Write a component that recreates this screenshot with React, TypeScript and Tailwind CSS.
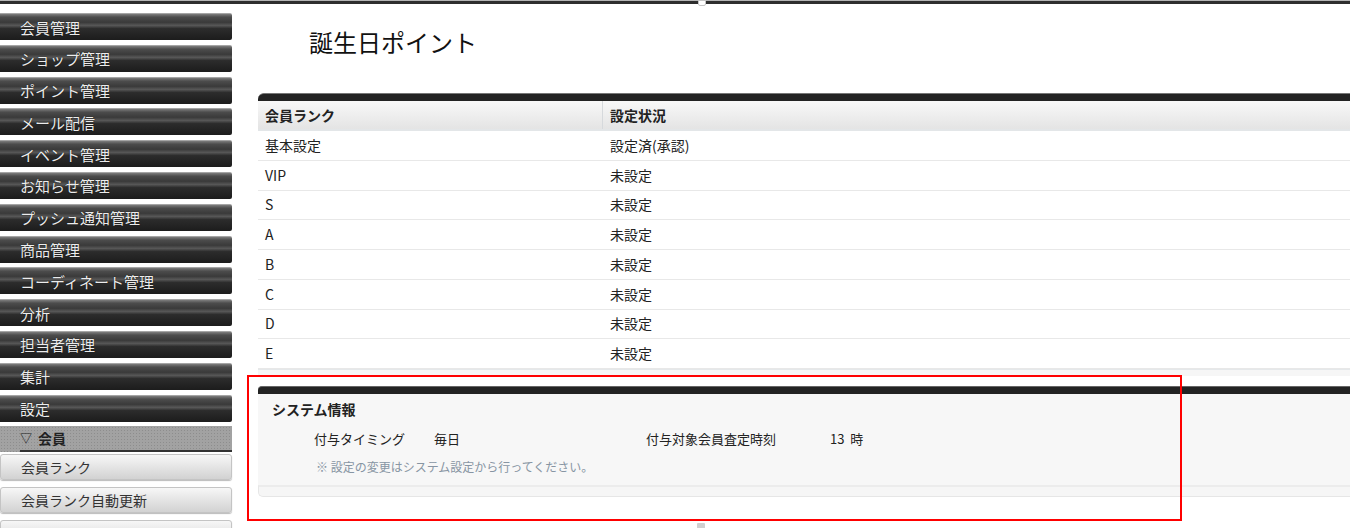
const font = { fontFamily: '"Noto Sans CJK JP", "Noto Sans", sans-serif' };

const mainMenu = [
  "会員管理",
  "ショップ管理",
  "ポイント管理",
  "メール配信",
  "イベント管理",
  "お知らせ管理",
  "プッシュ通知管理",
  "商品管理",
  "コーディネート管理",
  "分析",
  "担当者管理",
  "集計",
  "設定",
];

// the last one only peeks in at the bottom edge
const subMenu = ["会員ランク", "会員ランク自動更新", ""];

const ranks = [
  { name: "基本設定", status: "設定済(承認)" },
  { name: "VIP", status: "未設定" },
  { name: "S", status: "未設定" },
  { name: "A", status: "未設定" },
  { name: "B", status: "未設定" },
  { name: "C", status: "未設定" },
  { name: "D", status: "未設定" },
  { name: "E", status: "未設定" },
];

function Sidebar() {
  return (
    <nav className="w-[232px] shrink-0 pt-[9px] flex flex-col gap-[4.8px]">
      {mainMenu.map((label) => (
        <div
          key={label}
          className="h-[27px] flex items-center pl-[20px] rounded-r-[2px] border-t border-[#a5a5a5] bg-[linear-gradient(to_bottom,#7d7d7d_0%,#4c4c4c_12%,#3a3a3a_32%,#575757_44%,#2c2c2c_56%,#1c1c1c_100%)] text-[15px] leading-none text-[#ececec] [text-shadow:0_0_1px_#000]"
        >
          {label}
        </div>
      ))}
      <div className="h-[26px] flex items-end bg-[#a2a2a2] bg-[radial-gradient(#8d8d8d_1px,transparent_1px)] bg-[length:3px_3px] pl-[20px]">
        <div className="flex-1 h-full flex items-center border-b-2 border-[#333] text-[14px] font-bold leading-none text-[#222] gap-[6px]">
          <span className="text-[12px]">▽</span>
          <span>会員</span>
        </div>
      </div>
      <div className="flex flex-col gap-[7px] -mt-[3px]">
        {subMenu.map((label, i) => (
          <div
            key={i}
            className="h-[26px] flex items-center pl-[20px] rounded-[3px] border border-[#c4c4c4] bg-[linear-gradient(to_bottom,#f7f7f7_0%,#e8e8e8_40%,#d2d2d2_100%)] text-[14px] leading-none text-[#333] shadow-[0_1px_1px_#bbb]"
          >
            {label}
          </div>
        ))}
      </div>
    </nav>
  );
}

function RankTable() {
  return (
    <div className="mt-[38px]">
      <div className="h-[8px] bg-[#232323] rounded-tl-[6px] border-t border-[#777]" />
      <div className="flex h-[30px] bg-[linear-gradient(to_bottom,#f8f8f8,#e4e4e4)] border-b-2 border-[#e3e6e8] text-[14px] font-bold text-[#222]">
        <div className="w-[345px] flex items-center pl-[7px] border-r border-[#d6d9dc]">会員ランク</div>
        <div className="flex-1 flex items-center pl-[7px]">設定状況</div>
      </div>
      {ranks.map((r) => (
        <div
          key={r.name}
          className="flex h-[29.75px] border-b border-[#e8e8e8] bg-white text-[14px] text-[#222]"
        >
          <div className="w-[345px] flex items-center pl-[7px]">{r.name}</div>
          <div className="flex-1 flex items-center pl-[7px]">{r.status}</div>
        </div>
      ))}
      <div className="h-[7px] bg-[#f6f6f6] border-t border-[#e5e8ea]" />
    </div>
  );
}

function SystemInfo() {
  return (
    <div className="mt-[10px]">
      <div className="h-[8px] bg-[#232323] rounded-tl-[4px] border-t border-[#666]" />
      <div className="bg-[#f7f7f7] h-[91px] pt-[5px] pl-[14px] text-[#222]">
        <div className="h-[21px] flex items-center text-[14px] font-bold">システム情報</div>
        <div className="mt-[4px] h-[29px] flex items-center text-[13px] pl-[42px]">
          <span className="w-[120px]">付与タイミング</span>
          <span className="w-[212px]">毎日</span>
          <span className="w-[184px]">付与対象会員査定時刻</span>
          <span>13&nbsp;&nbsp;時</span>
        </div>
        <div className="h-[28px] flex items-center text-[12px] pl-[44px] text-[#8795a3]">
          ※ 設定の変更はシステム設定から行ってください。
        </div>
      </div>
      <div className="h-[12px] bg-[#f6f6f6] border-t-2 border-[#ececec] rounded-bl-[5px] border-l border-b border-l-[#e6e6e6] border-b-[#e6e6e6]" />
    </div>
  );
}

export default function App() {
  return (
    <div className="relative w-[1350px] h-[528px] overflow-hidden bg-white" style={font}>
      <div className="h-[4px] border-t border-[#b5b5b5] bg-[#2e2e2e]" />
      <div className="absolute left-[698px] top-0 w-[8px] h-[6px] bg-white border border-[#c5c5c5] rounded-b-[2px]" />
      <div className="flex">
        <Sidebar />
        <main className="flex-1 pl-[26px]">
          <h1 className="mt-[25px] pl-[51px] h-[26px] text-[24px] leading-[26px] text-[#111] font-normal">
            誕生日ポイント
          </h1>
          <RankTable />
          <SystemInfo />
        </main>
      </div>
      <div className="absolute left-[697px] top-[523px] w-[8px] h-[5px] bg-[#d0d0d0] rounded-t-[1px]" />
      <div className="absolute left-[247px] top-[375px] w-[935px] h-[146px] border-2 border-[#ff0000] pointer-events-none" />
    </div>
  );
}
